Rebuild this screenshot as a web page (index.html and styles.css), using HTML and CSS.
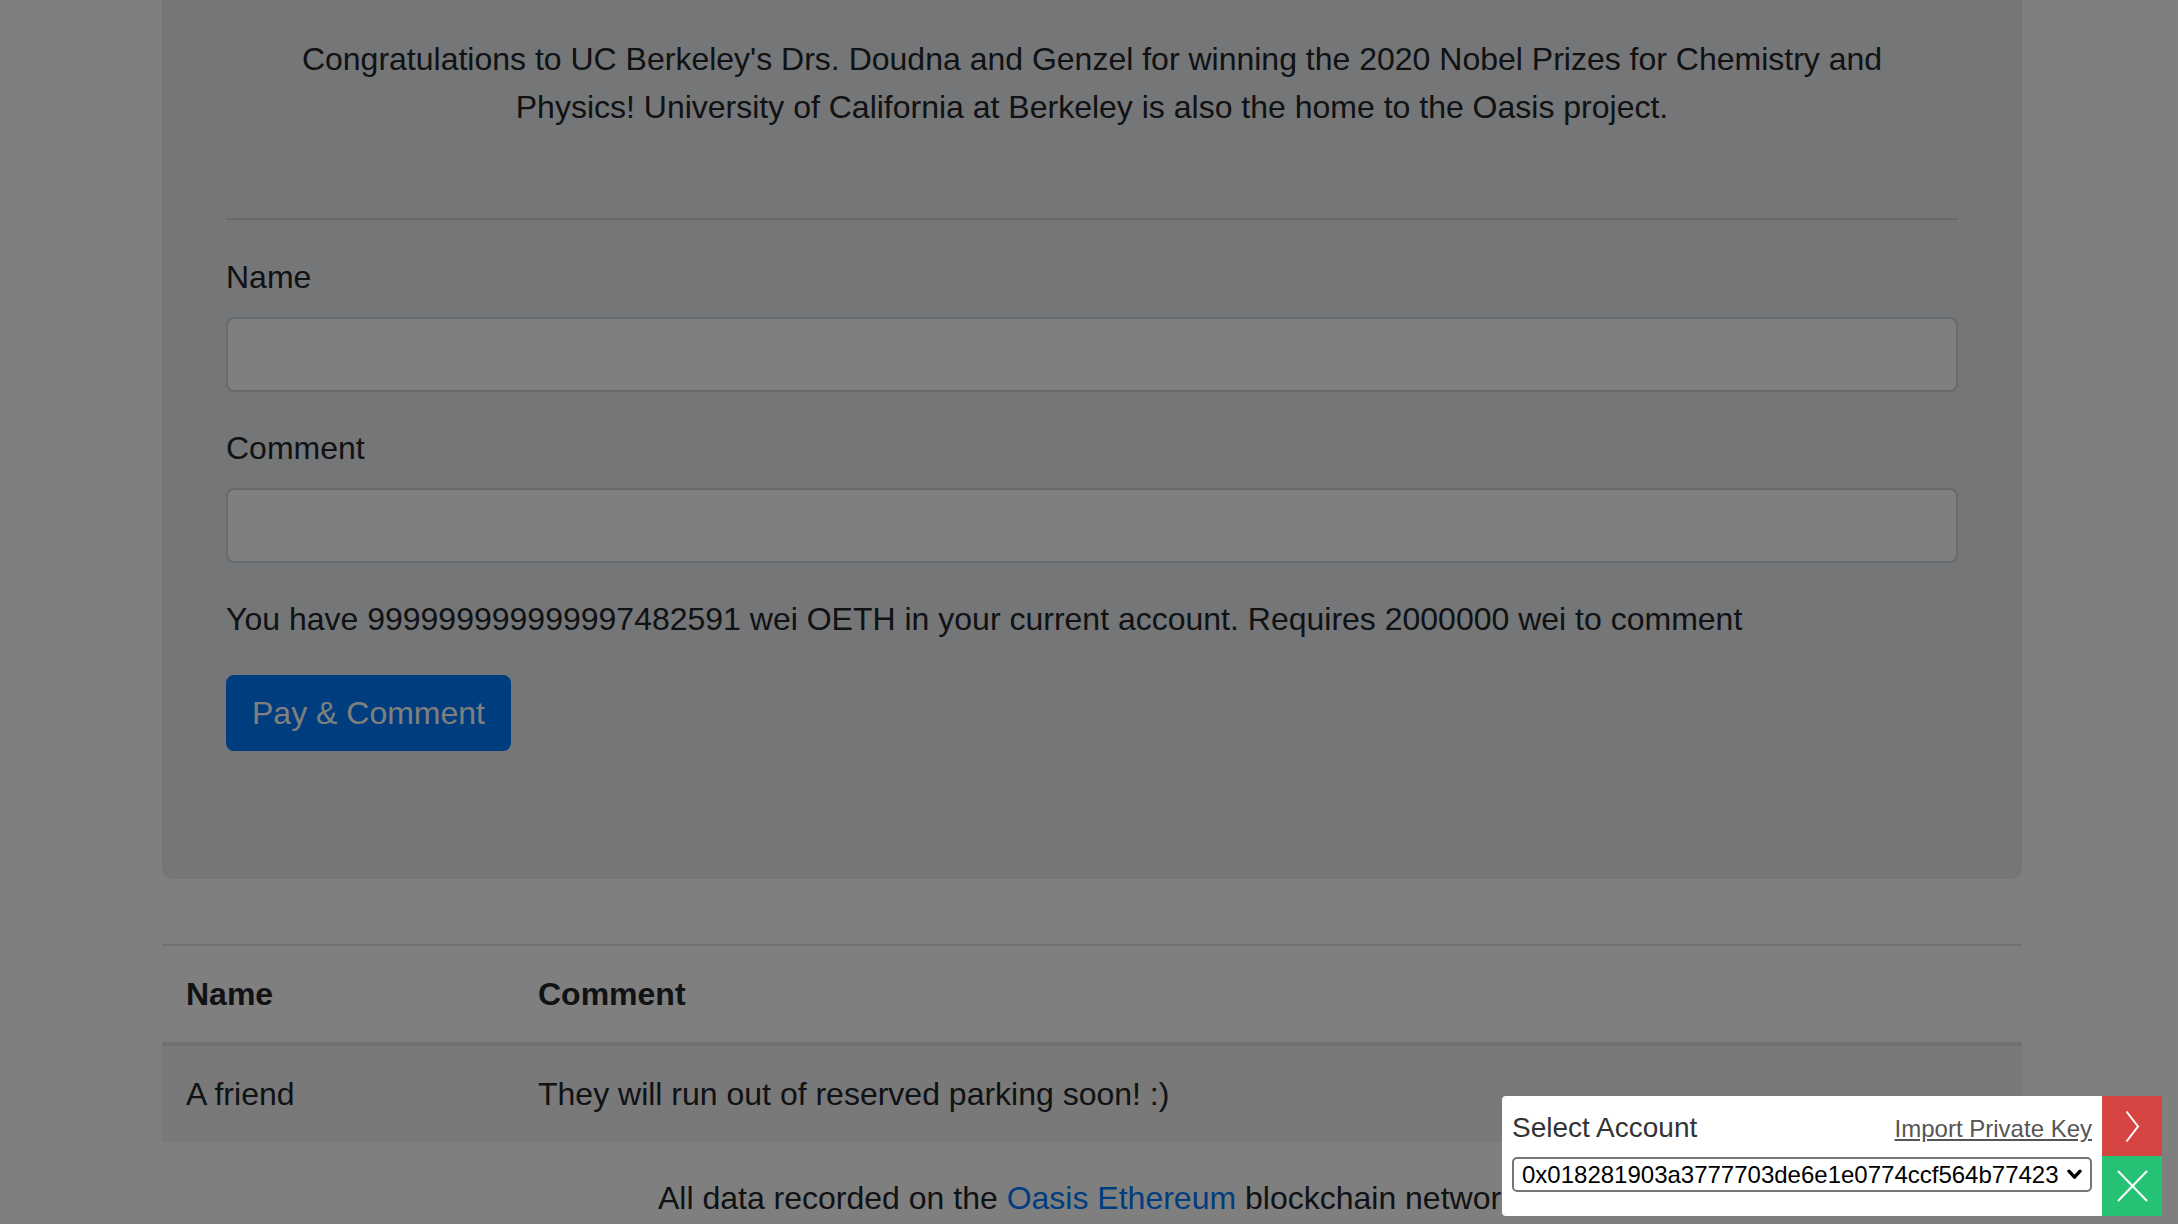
FILE: index.html
```html
<!DOCTYPE html>
<html lang="en">
<head>
<meta charset="utf-8">
<title>Oasis Guestbook</title>
<link rel="stylesheet" href="styles.css">
</head>
<body>
<div class="container">
  <div class="jumbotron">
    <p class="intro">Congratulations to UC Berkeley's Drs. Doudna and Genzel for winning the 2020 Nobel Prizes for Chemistry and<br>Physics! University of California at Berkeley is also the home to the Oasis project.</p>
    <hr class="divider">
    <form class="comment-form">
      <div class="form-group">
        <label class="form-label" for="name">Name</label>
        <input class="form-control" id="name" type="text">
      </div>
      <div class="form-group">
        <label class="form-label" for="comment">Comment</label>
        <input class="form-control" id="comment" type="text">
      </div>
      <p class="balance">You have 999999999999997482591 wei OETH in your current account. Requires 2000000 wei to comment</p>
      <button class="btn btn-primary" type="button">Pay &amp; Comment</button>
    </form>
  </div>

  <table class="comments">
    <thead>
      <tr><th class="col-name">Name</th><th>Comment</th></tr>
    </thead>
    <tbody>
      <tr><td>A friend</td><td>They will run out of reserved parking soon! :)</td></tr>
    </tbody>
  </table>

  <p class="footer-note">All data recorded on the <a class="link" href="#">Oasis Ethereum</a> blockchain network.</p>
</div>

<div class="overlay"></div>

<div class="wallet">
  <div class="wallet-panel">
    <div class="wallet-head">
      <span class="wallet-title">Select Account</span>
      <a class="wallet-import" href="#">Import Private Key</a>
    </div>
    <div class="account-select">
      <select class="account-input">
        <option>0x018281903a3777703de6e1e0774ccf564b77423</option>
      </select>
      <svg class="select-chevron" width="15" height="11" viewBox="0 0 15 11" aria-hidden="true">
        <path d="M2 2.2 L7.5 8.2 L13 2.2" fill="none" stroke="#000" stroke-width="3.4" stroke-linecap="round" stroke-linejoin="round"/>
      </svg>
    </div>
  </div>
  <div class="wallet-actions">
    <button class="wallet-btn wallet-next" type="button" aria-label="Next">
      <svg width="15" height="33" viewBox="0 0 15 33" aria-hidden="true">
        <polyline points="1.5,1.5 13,16.5 1.5,31.5" fill="none" stroke="#fff" stroke-width="2"/>
      </svg>
    </button>
    <button class="wallet-btn wallet-close" type="button" aria-label="Close">
      <svg width="31" height="32" viewBox="0 0 31 32" aria-hidden="true">
        <line x1="1" y1="1" x2="30" y2="31" stroke="#fff" stroke-width="2"/>
        <line x1="30" y1="1" x2="1" y2="31" stroke="#fff" stroke-width="2"/>
      </svg>
    </button>
  </div>
</div>
</body>
</html>
```

FILE: styles.css
```css
* {
  box-sizing: border-box;
}

html,
body {
  margin: 0;
  padding: 0;
}

body {
  font-family: "Liberation Sans", Arial, Helvetica, sans-serif;
  font-size: 32px;
  line-height: 48px;
  color: #212529;
  background: #fff;
}

.container {
  width: 1860px;
  margin-left: 162px;
}

.jumbotron {
  background: #e9ecef;
  padding: 35px 64px 128px;
  border-radius: 0 0 10px 10px;
  margin-bottom: 65px;
}

.intro {
  margin: 0 0 32px;
  text-align: center;
}

.divider {
  margin: 87px 0 33px;
  border: 0;
  border-top: 2px solid rgba(0, 0, 0, 0.1);
  height: 0;
}

.comment-form {
  margin: 0;
}

.form-group {
  margin-bottom: 32px;
}

.form-label {
  display: inline-block;
  margin-bottom: 16px;
}

.form-control {
  display: block;
  width: 100%;
  height: 75px;
  padding: 12px 24px;
  font: inherit;
  color: #495057;
  background: #fff;
  border: 2px solid #ced4da;
  border-radius: 8px;
}

.balance {
  margin: 0 0 32px;
}

.btn {
  display: inline-block;
  font: inherit;
  line-height: 48px;
  padding: 12px 24px;
  border-radius: 8px;
  cursor: pointer;
}

.btn-primary {
  color: #fff;
  background: #007bff;
  border: 2px solid #007bff;
}

.comments {
  width: 100%;
  border-collapse: collapse;
  margin-bottom: 32px;
}

.comments th,
.comments td {
  padding: 24px;
  text-align: left;
  vertical-align: top;
  border-top: 2px solid #dee2e6;
}

.comments thead th {
  font-weight: bold;
  vertical-align: bottom;
  border-bottom: 4px solid #dee2e6;
}

.comments .col-name {
  width: 352px;
}

.comments tbody tr:nth-of-type(odd) {
  background: rgba(0, 0, 0, 0.05);
}

.footer-note {
  margin: 0;
  text-align: center;
}

.link {
  color: #007bff;
  text-decoration: none;
}

.overlay {
  position: fixed;
  inset: 0;
  background: rgba(0, 0, 0, 0.5);
  z-index: 10;
}

.wallet {
  position: fixed;
  right: 16px;
  bottom: 8px;
  z-index: 20;
  display: flex;
  font-family: "Liberation Sans", Arial, Helvetica, sans-serif;
}

.wallet-panel {
  width: 600px;
  height: 120px;
  background: #fff;
  border-radius: 4px 0 0 4px;
  padding: 16px 10px 0 10px;
}

.wallet-head {
  display: flex;
  justify-content: space-between;
  align-items: baseline;
  height: 32px;
  line-height: 32px;
  margin-bottom: 13px;
}

.wallet-title {
  font-size: 28px;
  color: #333;
}

.wallet-import {
  font-size: 24px;
  color: #555;
  text-decoration: underline;
}

.account-select {
  display: flex;
  align-items: center;
  height: 35px;
  border: 2px solid #767676;
  border-radius: 5px;
  padding: 0 8px;
}

.account-input {
  appearance: none;
  -webkit-appearance: none;
  flex: 1;
  min-width: 0;
  border: 0;
  padding: 0;
  margin: 0;
  background: transparent;
  font-family: "Liberation Sans", Arial, Helvetica, sans-serif;
  font-size: 24px;
  line-height: 30px;
  color: #000;
  outline: none;
}

.select-chevron {
  flex: none;
  margin-left: 4px;
}

.wallet-actions {
  display: flex;
  flex-direction: column;
}

.wallet-btn {
  width: 60px;
  height: 60px;
  border: 0;
  padding: 0;
  margin: 0;
  display: flex;
  align-items: center;
  justify-content: center;
  cursor: pointer;
}

.wallet-next {
  background: #d64541;
}

.wallet-close {
  background: #25c276;
}
```
